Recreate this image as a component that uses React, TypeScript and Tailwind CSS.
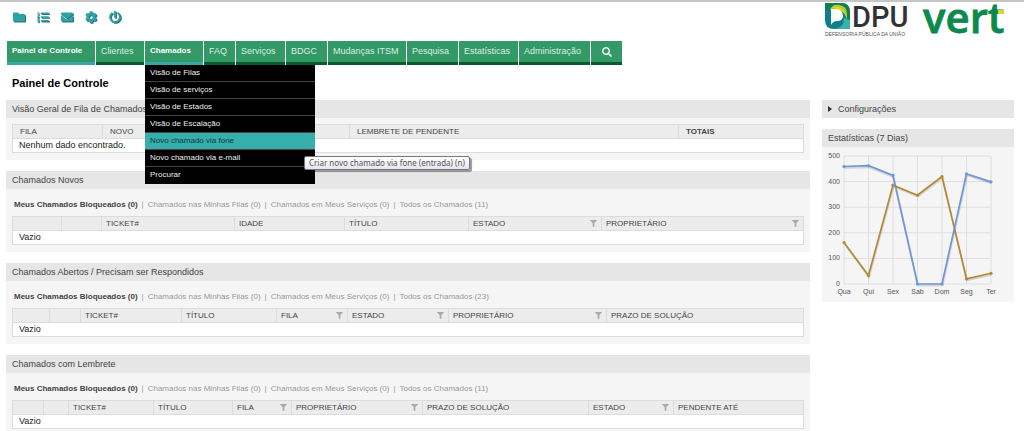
import React from "react";
import { FaFolder, FaListOl, FaEnvelope, FaCog, FaPowerOff, FaSearch, FaFilter } from "react-icons/fa";

const tools = [
  { label: "Chamados bloqueados", Icon: FaFolder },
  { label: "Filas", Icon: FaListOl },
  { label: "Mensagens", Icon: FaEnvelope },
  { label: "Preferências", Icon: FaCog },
  { label: "Sair", Icon: FaPowerOff },
];

const chamadosMenu = [
  "Visão de Filas",
  "Visão de serviços",
  "Visão de Estados",
  "Visão de Escalação",
  "Novo chamado via fone",
  "Novo chamado via e-mail",
  "Procurar",
];

const navItems = [
  { label: "Painel de Controle", width: "w-[88px]", active: true },
  { label: "Clientes", width: "w-[48px]" },
  { label: "Chamados", width: "w-[58px]", active: true, menu: chamadosMenu },
  { label: "FAQ", width: "w-[31px]" },
  { label: "Serviços", width: "w-[49px]" },
  { label: "BDGC", width: "w-[41px]" },
  { label: "Mudanças ITSM", width: "w-[78px]" },
  { label: "Pesquisa", width: "w-[51px]" },
  { label: "Estatísticas", width: "w-[59px]" },
  { label: "Administração", width: "w-[71px]" },
];

type Column = { label: string; width: string; filter?: boolean; bold?: boolean };

function Logos() {
  return (
    <svg viewBox="0 0 184 36" className="h-9 w-[184px] shrink-0 overflow-visible" role="img" aria-label="DPU Vert">
      <path d="M1 1H17Q26 1 26 10V27H10Q1 27 1 18Z" fill="#0e7d8f" />
      <path d="M5 1H17Q26 1 26 10V21Q22 20 21 13Q20 6 13 5Q6 5 1 9V1Z" fill="#10814a" />
      <path d="M6 8Q8 2 15 3Q23 4 23 12V18Q20 8 14 7Q9 6 6 8Z" fill="#a9cf38" />
      <path d="M8 6Q11 4 15 5Q20 7 21 12Q17 7 8 6Z" fill="#f2d21b" />
      <path d="M26 18V27H10Q20 26 20 17Q21 14 22 17Z" fill="#37b3a8" />
      <path d="M7 7H13Q19 8 19 14Q19 19 13 19Q9 19 7 23Z" fill="#fff" />
      <text x="28" y="25" fill="#303236" className="font-['Roboto',sans-serif] text-[29px] font-medium">DPU</text>
      <text x="1" y="34" fill="#555" className="font-['Liberation_Sans',sans-serif] text-[5px]">DEFENSORIA PÚBLICA DA UNIÃO</text>
      <text x="99" y="31" fill="#0c8a4d" stroke="#0c8a4d" strokeWidth="0.8" className="font-['Open_Sans',sans-serif] text-[42px] font-semibold">vert</text>
      <rect x="174" y="8" width="6" height="4" fill="#d9d72b" />
    </svg>
  );
}

function Section({ title, children }: { title: string; children: React.ReactNode }) {
  return (
    <section className="group bg-[#f5f5f5]">
      <h2 className="h-[18px] bg-[#e6e6e6] px-1.5 text-[9px] leading-[18px] text-[#444]">{title}</h2>
      <div className="px-1.5 pb-[7px] group-last:pb-0.5">{children}</div>
    </section>
  );
}

function Filters({ total }: { total: number }) {
  const others = ["Chamados nas Minhas Filas (0)", "Chamados em Meus Serviços (0)", `Todos os Chamados (${total})`];
  return (
    <div className="flex h-[27px] items-center gap-1 pt-1 pl-0.5 text-[8px] text-[#999]">
      <a href="#bloqueados" className="font-bold text-[#444]">Meus Chamados Bloqueados (0)</a>
      {others.map((label) => (
        <React.Fragment key={label}>
          <span>|</span>
          <a href="#filtro">{label}</a>
        </React.Fragment>
      ))}
    </div>
  );
}

function DataTable({ columns, empty, pad = "pl-1" }: { columns: Column[]; empty: string; pad?: string }) {
  return (
    <table className="w-full table-fixed border-collapse border border-[#dcdcdc] text-left">
      <thead>
        <tr className="h-3.5 bg-[#ececec]">
          {columns.map((c, i) => (
            <th key={i} scope="col" className={`${c.width} ${pad} border border-[#dcdcdc] py-0 pr-1 text-[8px] leading-[13px] text-[#444] ${c.bold ? "font-bold" : "font-normal"}`}>
              <span className="flex items-center justify-between whitespace-nowrap">
                {c.label}
                {c.filter && <FaFilter className="size-[7px] text-[#aaa]" />}
              </span>
            </th>
          ))}
        </tr>
      </thead>
      <tbody>
        <tr className="h-3.5 bg-white">
          <td colSpan={columns.length} className="py-0 pl-1.5 text-[9px] leading-[13px] text-[#222]">{empty}</td>
        </tr>
      </tbody>
    </table>
  );
}

const queueColumns: Column[] = [
  { label: "FILA", width: "w-[90px]" },
  { label: "NOVO", width: "w-[247px]" },
  { label: "LEMBRETE DE PENDENTE", width: "w-[329px]" },
  { label: "TOTAIS", width: "", bold: true },
];
const newColumns: Column[] = [
  { label: "", width: "w-[49px]" },
  { label: "", width: "w-[40px]" },
  { label: "TICKET#", width: "w-[133px]" },
  { label: "IDADE", width: "w-[110px]" },
  { label: "TÍTULO", width: "w-[124px]" },
  { label: "ESTADO", width: "w-[133px]", filter: true },
  { label: "PROPRIETÁRIO", width: "", filter: true },
];
const openColumns: Column[] = [
  { label: "", width: "w-[37px]" },
  { label: "", width: "w-[31px]" },
  { label: "TICKET#", width: "w-[101px]" },
  { label: "TÍTULO", width: "w-[95px]" },
  { label: "FILA", width: "w-[71px]", filter: true },
  { label: "ESTADO", width: "w-[101px]", filter: true },
  { label: "PROPRIETÁRIO", width: "w-[158px]", filter: true },
  { label: "PRAZO DE SOLUÇÃO", width: "" },
];
const reminderColumns: Column[] = [
  { label: "", width: "w-[31px]" },
  { label: "", width: "w-[25px]" },
  { label: "TICKET#", width: "w-[85px]" },
  { label: "TÍTULO", width: "w-[79px]" },
  { label: "FILA", width: "w-[59px]", filter: true },
  { label: "PROPRIETÁRIO", width: "w-[131px]", filter: true },
  { label: "PRAZO DE SOLUÇÃO", width: "w-[166px]" },
  { label: "ESTADO", width: "w-[85px]", filter: true },
  { label: "PENDENTE ATÉ", width: "" },
];

const days = ["Qua", "Qui", "Sex", "Sab", "Dom", "Seg", "Ter"];
const series = [
  { color: "#b58a35", values: [162, 33, 386, 347, 420, 20, 42] },
  { color: "#6f97d8", values: [459, 462, 424, 0, 0, 430, 399] },
];
const px = (i: number) => 22 + i * 24.5;
const py = (v: number) => 137 - v * 0.256;

function Chart() {
  return (
    <svg viewBox="0 0 192 155" className="block w-full" role="img" aria-label="Estatísticas (7 Dias)">
      {[0, 100, 200, 300, 400, 500].map((v) => (
        <g key={v}>
          <line x1={22} x2={169} y1={py(v)} y2={py(v)} stroke="#dedede" />
          <text x="18" y={py(v) + 2} textAnchor="end" fill="#555" className="text-[7px]">{v}</text>
        </g>
      ))}
      {days.map((d, i) => (
        <g key={d}>
          <line x1={px(i)} x2={px(i)} y1={9} y2={137} stroke="#dedede" />
          <text x={px(i)} y="147" textAnchor="middle" fill="#555" className="text-[7px]">{d}</text>
        </g>
      ))}
      {series.map((s) => (
        <g key={s.color}>
          <polyline points={s.values.map((v, i) => `${px(i) + 0.5},${py(v) + 1.5}`).join(" ")} fill="none" stroke="#000" strokeOpacity="0.12" strokeWidth="2" />
          <polyline points={s.values.map((v, i) => `${px(i)},${py(v)}`).join(" ")} fill="none" stroke={s.color} strokeWidth="1.7" />
          {s.values.map((v, i) => (
            <circle key={i} cx={px(i)} cy={py(v)} r="1.6" fill={s.color} />
          ))}
        </g>
      ))}
    </svg>
  );
}

export default function App() {
  return (
    <div className="border-t-2 border-[#c6c6c6] bg-white font-['Liberation_Sans',Arial,sans-serif]">
      <header className="flex h-[39px] items-start justify-between pr-4 pl-[13px]">
        <div className="flex gap-3 pt-[9px]">
          {tools.map(({ label, Icon }) => (
            <button key={label} type="button" aria-label={label} className="text-[#2fa3a3] drop-shadow-[1px_1px_0_#2a6d74]">
              <Icon className="size-3" />
            </button>
          ))}
        </div>
        <Logos />
      </header>

      <nav className="flex gap-px pl-[7px] text-[9px]">
        {navItems.map((item) => (
          <div key={item.label} className="relative">
            <a
              href="#menu"
              className={`block h-6 ${item.width} border-b-[3px] pl-[5px] leading-5 whitespace-nowrap ${
                item.active ? "border-[#35a9a8] bg-[#339966] text-[8px] font-bold text-white" : "border-[#0b5a2c] bg-[#339966] text-[#d9f0e2]"
              }`}
            >
              {item.label}
            </a>
            {item.menu && (
              <ul className="absolute top-6 left-0 z-10 w-[170px] bg-black text-[8px]">
                {item.menu.map((entry) => {
                  const current = entry === "Novo chamado via fone";
                  return (
                    <li key={entry} className="relative border-b border-[#444] last:border-black">
                      <a href="#item" className={`block h-4 pl-[5px] leading-4 ${current ? "bg-[#35aeac] text-[#0d3b3b]" : "text-[#eee]"}`}>
                        {entry}
                      </a>
                      {current && (
                        <span role="tooltip" className="absolute top-[23px] left-[159px] z-20 rounded-xs border border-[#777] bg-linear-to-b from-white to-[#e6e6f0] px-1 font-['Noto_Sans',sans-serif] text-[8px] leading-3 whitespace-nowrap text-[#555] shadow-[2px_2px_1px_rgba(0,0,0,0.4)]">
                          Criar novo chamado via fone (entrada) (n)
                        </span>
                      )}
                    </li>
                  );
                })}
              </ul>
            )}
          </div>
        ))}
        <button type="button" aria-label="Procurar" className="flex h-6 w-[31px] items-center justify-center border-b-[3px] border-[#0b5a2c] bg-[#339966] text-[#e6f5ec]">
          <FaSearch className="size-2.5" />
        </button>
      </nav>

      <h1 className="pt-[13px] pb-[11px] pl-3 text-[11px] leading-[11px] font-bold text-black">Painel de Controle</h1>

      <main className="flex items-start gap-3 pr-2.5 pl-1.5">
        <div className="flex min-w-0 flex-1 flex-col gap-[11px]">
          <Section title="Visão Geral de Fila de Chamados">
            <div className="pt-1.5">
              <DataTable columns={queueColumns} empty="Nenhum dado encontrado." pad="pl-[7px]" />
            </div>
          </Section>
          <Section title="Chamados Novos">
            <Filters total={11} />
            <DataTable columns={newColumns} empty="Vazio" />
          </Section>
          <Section title="Chamados Abertos / Precisam ser Respondidos">
            <Filters total={23} />
            <DataTable columns={openColumns} empty="Vazio" />
          </Section>
          <Section title="Chamados com Lembrete">
            <Filters total={11} />
            <DataTable columns={reminderColumns} empty="Vazio" />
          </Section>
        </div>

        <aside className="flex w-48 shrink-0 flex-col gap-[11px] text-[9px] leading-[18px] text-[#444]">
          <button type="button" className="flex h-[18px] items-center gap-1.5 bg-[#e6e6e6] pl-1.5 text-left">
            <svg viewBox="0 0 4 6" className="h-1.5 w-1"><path d="M0 0L4 3L0 6Z" fill="#333" /></svg>
            Configurações
          </button>
          <section className="bg-[#f5f5f5]">
            <h2 className="h-[18px] bg-[#e6e6e6] pl-1.5">Estatísticas (7 Dias)</h2>
            <Chart />
          </section>
        </aside>
      </main>
    </div>
  );
}
